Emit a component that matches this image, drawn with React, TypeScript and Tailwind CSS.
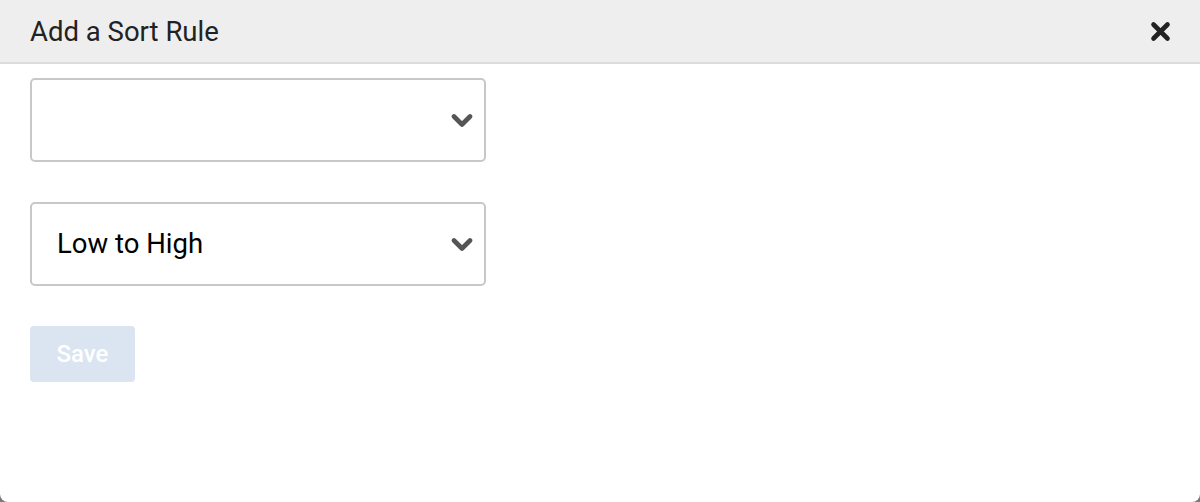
function Chevron() {
  return (
    <svg width="22" height="15" viewBox="0 0 22 15" className="text-[#555555]">
      <path d="M3 3.5 L11 11.5 L19 3.5" fill="none" stroke="currentColor" strokeWidth="4.6" strokeLinecap="round" strokeLinejoin="round" />
    </svg>
  );
}

function CloseIcon() {
  return (
    <svg width="21" height="21" viewBox="0 0 21 21" className="text-[#222222]">
      <path d="M3.5 3.5 L17.5 17.5 M17.5 3.5 L3.5 17.5" fill="none" stroke="currentColor" strokeWidth="4.6" strokeLinecap="round" />
    </svg>
  );
}

function SelectBox({ value }: { value?: string }) {
  return (
    <div className="w-[456px] h-[84px] rounded-[5px] border-2 border-[#c8c8c8] bg-white flex items-center pl-[25px] pr-[11px]">
      <span className="flex-1 text-[27.5px] text-black">{value ?? ''}</span>
      <Chevron />
    </div>
  );
}

export default function App() {
  return (
    <div className="w-[1200px] h-[502px] bg-[#7a7a7a]" style={{ fontFamily: 'Roboto, "Noto Sans", sans-serif' }}>
      <div className="h-full bg-white rounded-b-[8px] flex flex-col overflow-hidden">
        {/* Header */}
        <div className="h-[64px] bg-[#eeeeee] border-b-2 border-[#dcdcdc] flex items-center justify-between pl-[30px] pr-[29px]">
          <h2 className="text-[27.5px] text-[#222222] pt-[2px]">Add a Sort Rule</h2>
          <CloseIcon />
        </div>

        {/* Body */}
        <div className="flex flex-col gap-[40px] pl-[30px] pt-[14px]">
          <SelectBox />
          <SelectBox value="Low to High" />
          <button
            disabled
            className="w-[105px] h-[56px] rounded-[4px] bg-[#dae5f1] text-white text-[24px] font-medium"
          >
            Save
          </button>
        </div>
      </div>
    </div>
  );
}
